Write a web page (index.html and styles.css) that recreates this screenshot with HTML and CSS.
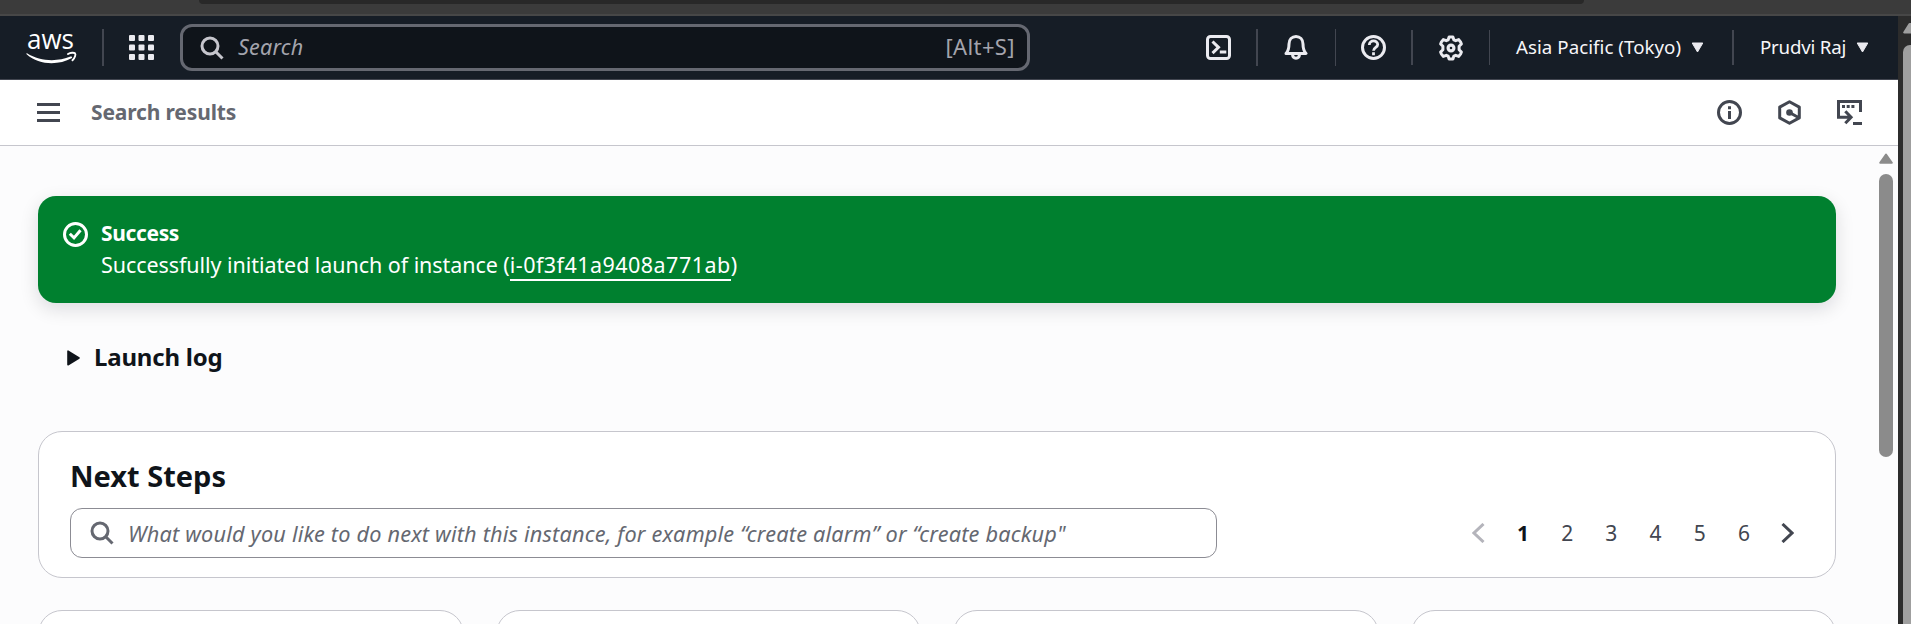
FILE: index.html
```html
<!DOCTYPE html>
<html lang="en">
<head>
<meta charset="utf-8">
<title>Launch an instance</title>
<link rel="stylesheet" href="styles.css">
</head>
<body>
<div class="browser-edge"><div class="address-pill"></div></div>
<div class="window">
  <div class="page">
    <header class="topnav">
      <svg class="logo" width="52" height="46" viewBox="0 -12 52 46" aria-label="aws">
        <text class="logo-text" x="1" y="18" textLength="47" lengthAdjust="spacingAndGlyphs">aws</text>
        <path d="M1 22.200C14 30.500 31 31 44.500 25.600c1.400-.7 2.300.6 1 1.600C33 34.200 13 34.500.6 23.200c-.6-.6-.2-1.300.4-1z" fill="#fff"/>
        <path d="M42 23c2.600-1.600 6-1.600 7-.7 1 1 0 4.700-2.500 7" fill="none" stroke="#fff" stroke-width="1.900" stroke-linecap="round"/>
      </svg>
      <span class="divider logo-divider"></span>
      <svg class="apps" width="25" height="25" viewBox="0 0 25 25" fill="#ebebf0">
        <rect width="6" height="6" rx="1"/><rect x="9.500" width="6" height="6" rx="1"/><rect x="19" width="6" height="6" rx="1"/>
        <rect y="9.500" width="6" height="6" rx="1"/><rect x="9.500" y="9.500" width="6" height="6" rx="1"/><rect x="19" y="9.500" width="6" height="6" rx="1"/>
        <rect y="19" width="6" height="6" rx="1"/><rect x="9.500" y="19" width="6" height="6" rx="1"/><rect x="19" y="19" width="6" height="6" rx="1"/>
      </svg>
      <div class="search">
        <svg width="24" height="24" viewBox="0 0 24 24" fill="none" stroke="#c6c6cd" stroke-width="3"><circle cx="10" cy="10" r="8"/><path d="M15.500 15.500l7 7"/></svg>
        <span class="search-label">Search</span>
        <span class="search-key">[Alt+S]</span>
      </div>
      <nav class="tools">
        <div class="tool"><svg width="25" height="25" viewBox="0 0 25 25" fill="none" stroke="#ebebf0" stroke-width="3"><rect x="1.500" y="1.500" width="22" height="22" rx="3"/><path d="M6.500 6.500l6 5.800-6 5.800M13.800 17h6.500"/></svg></div>
        <div class="tool thin bell"><svg width="24" height="25" viewBox="0 0 24 25" fill="none" stroke="#ebebf0" stroke-width="3" stroke-linejoin="round"><path d="M2 18.500c2.700-3 3-5 3-9.500C5 4.500 8 1.500 12 1.500s7 3 7 7.500c0 4.500.3 6.500 3 9.500z"/><path d="M8.500 19.500c.3 5 6.700 5 7 0"/></svg></div>
        <div class="tool short"><svg width="25" height="25" viewBox="0 0 25 25" fill="none" stroke="#ebebf0"><circle cx="12.500" cy="12.500" r="11" stroke-width="3"/><path d="M8.300 10c0-5.400 8.400-5.200 8.400-.5 0 3-4.200 2.800-4.200 6.300M12.500 17.300v3" stroke-width="2.800"/></svg></div>
        <div class="tool thin short"><svg width="26" height="26" viewBox="0 0 26 26" fill="none" stroke="#ebebf0" stroke-width="3" stroke-linejoin="round"><path d="M11.100 2h3.800l1 2.900 1.800.8 3-1.100 2 2.600.7 1.800-2.300 2.300v3.400l2.300 2.300-.7 1.800-2 2.600-3-1.100-1.800.8-1 2.900h-3.800l-1-2.900-1.800-.8-3 1.100-2-2.600L2.600 17l2.300-2.300v-3.400L2.600 9l.7-1.800 2-2.600 3 1.100 1.800-.8z"/><circle cx="13" cy="13" r="2.900" stroke-width="3.200"/></svg></div>
        <div class="menu region"><span class="region-name">Asia Pacific (Tokyo)</span><svg width="13" height="11" viewBox="0 0 13 11"><path d="M1.200 1h10.600L6.500 10z" fill="#ebebf0" stroke="#ebebf0" stroke-linejoin="round"/></svg></div>
        <div class="menu"><span class="user-name">Prudvi Raj</span><svg width="13" height="11" viewBox="0 0 13 11"><path d="M1.200 1h10.600L6.500 10z" fill="#ebebf0" stroke="#ebebf0" stroke-linejoin="round"/></svg></div>
      </nav>
    </header>
    <div class="crumbs">
      <svg width="23" height="19" viewBox="0 0 23 19" fill="#424650"><path d="M0 0h23v3H0zM0 8h23v3H0zM0 16h23v3H0z"/></svg>
      <span class="crumb">Search results</span>
      <div class="crumb-tools">
        <svg width="25" height="25" viewBox="0 0 25 25" fill="none" stroke="#424650" stroke-width="3"><circle cx="12.500" cy="12.500" r="11"/><path d="M12.500 6.300v3M12.500 11v8"/></svg>
        <svg width="23" height="25" viewBox="0 0 23 25" fill="none" stroke="#424650" stroke-width="3" stroke-linejoin="round"><path d="M11.500 1.700l9.800 5.400v10.800l-9.800 5.400-9.800-5.400V7.100zM11.500 12.500l8.500 4.700"/><circle cx="11.500" cy="12.500" r="3.300" fill="#424650" stroke="none"/></svg>
        <svg width="25" height="25" viewBox="0 0 25 25" fill="none" stroke="#424650" stroke-width="3"><path d="M23.500 12V1.500h-22v15.800H13M8.300 11.300l5.800 6-5.800 6M16 23.500h9"/><path d="M5 6.500h13" stroke-dasharray="3 1.700"/></svg>
      </div>
    </div>
    <div class="body">
      <main class="content">
        <section class="flash">
          <svg width="25" height="25" viewBox="0 0 25 25" fill="none" stroke="#fff" stroke-width="3"><circle cx="12.500" cy="12.500" r="11"/><path d="M6.800 11.800l4.200 4.100 6.500-7.600"/></svg>
          <div>
            <div class="flash-title">Success</div>
            <div class="flash-text">Successfully initiated launch of instance (<a class="instance">i-0f3f41a9408a771ab</a>)</div>
          </div>
        </section>
        <div class="log">
          <svg width="13" height="16" viewBox="0 0 13 16"><path d="M1 1.200v13.600L12 8z" fill="#0f141a" stroke="#0f141a" stroke-width="1.600" stroke-linejoin="round"/></svg>
          <span class="log-title">Launch log</span>
        </div>
        <section class="card next">
          <h2>Next Steps</h2>
          <div class="filter">
            <div class="input">
              <svg width="24" height="24" viewBox="0 0 24 24" fill="none" stroke="#656871" stroke-width="3"><circle cx="10" cy="10" r="8"/><path d="M15.500 15.500l7 7"/></svg>
              <span class="placeholder">What would you like to do next with this instance, for example “create alarm” or “create backup"</span>
            </div>
            <div class="pages">
              <svg width="13" height="20" viewBox="0 0 13 20" fill="none" stroke="#b4b4bb" stroke-width="3"><path d="M11.500 1L2 10l9.500 9"/></svg>
              <div class="numbers"><span class="current">1</span><span>2</span><span>3</span><span>4</span><span>5</span><span>6</span></div>
              <svg width="13" height="20" viewBox="0 0 13 20" fill="none" stroke="#424650" stroke-width="3"><path d="M1.500 1L11 10l-9.500 9"/></svg>
            </div>
          </div>
        </section>
        <div class="tiles"><div class="card"></div><div class="card"></div><div class="card"></div><div class="card"></div></div>
      </main>
      <div class="scroll">
        <svg width="14" height="11" viewBox="0 0 14 11"><path d="M7 1.500L12.800 9.800H1.200z" fill="#8b8b8b" stroke="#8b8b8b" stroke-width="2" stroke-linejoin="round"/></svg>
        <div class="thumb"></div>
      </div>
    </div>
  </div>
  <div class="outer-scroll">
    <svg width="8" height="11" viewBox="0 0 8 11"><path d="M8 1H6.500L1.200 9.500H8z" fill="#9f9f9f" stroke="#9f9f9f" stroke-width="2" stroke-linejoin="round"/></svg>
    <div class="outer-thumb"></div>
  </div>
</div>
</body>
</html>
```
FILE: styles.css
```css
* { box-sizing: border-box; }
body {
  margin: 0;
  height: 624px;
  overflow: hidden;
  display: flex;
  flex-direction: column;
  background: #2c2c2c;
  color: #0f141a;
  font-family: "Noto Sans", "Open Sans", sans-serif;
  font-size: 21px;
}
svg { display: block; flex: none; }
span, .flash-text { white-space: nowrap; }
.browser-edge { height: 16px; flex: none; background: #3b3b3b; border-bottom: 2px solid #474747; }
.address-pill { height: 4px; margin: 0 327px 0 199px; background: #282828; border-radius: 0 0 14px 14px; }
.window { display: flex; height: 608px; overflow: hidden; }
.page { width: 1898px; display: flex; flex-direction: column; background: #fcfcfd; }

.topnav { height: 64px; flex: none; display: flex; align-items: center; padding-left: 26px; background: #161d26; border-bottom: 1px solid #424650; color: #ebebf0; }
.logo { margin-bottom: 12px; }
.logo-text { font-family: "Open Sans", "Noto Sans", sans-serif; font-size: 28px; font-weight: 500; fill: #fff; }
.divider { width: 2px; height: 37px; background: #424650; }
.logo-divider { margin-left: 24px; }
.apps { margin-left: 25px; }
.search { width: 850px; height: 47px; margin-left: 26px; padding: 0 12px 0 17px; border: 3px solid #656871; border-radius: 12px; background: #0f141a; display: flex; align-items: center; }
.search-label { margin: -2px 0 0 14px; font-size: 21.500px; font-style: italic; letter-spacing: .2px; color: #a4a4ad; }
.search-key { margin: -3px 0 0 auto; font-size: 22px; letter-spacing: .4px; color: #a4a4ad; }
.tools { margin-left: 150px; display: flex; align-items: center; }
.tool { width: 78px; height: 37px; display: flex; align-items: center; justify-content: center; border-right: 2px solid #424650; }
.tool.thin { border-right-width: 1px; }
.tool.bell { padding-right: 2px; }
.tool.short { width: 77px; height: 35px; }
.menu { height: 35px; display: flex; align-items: center; gap: 10px; padding-left: 26px; font-size: 18.700px; color: #f6f6f9; }
.menu span { margin-top: -2px; }
.region { width: 244px; border-right: 2px solid #424650; }
.region-name { letter-spacing: .05px; }
.user-name { letter-spacing: -.2px; }

.crumbs { height: 66px; flex: none; display: flex; align-items: center; padding: 0 36px 0 37px; background: #fff; border-bottom: 1px solid #c6c6cd; }
.crumb { margin: -2px 0 0 31px; font-weight: 700; letter-spacing: -.15px; color: #656871; }
.crumb-tools { margin-left: auto; display: flex; gap: 36px; }

.body { flex: 1; display: flex; min-height: 0; overflow: hidden; }
.content { width: 1836px; padding: 50px 0 0 38px; }
.flash { height: 107px; padding: 26px 25px; display: flex; gap: 13px; border-radius: 18px; background: #00802f; color: #fff; box-shadow: 0 6px 18px 1px rgba(0, 7, 22, .12); }
.flash-title, .flash-text { height: 32px; line-height: 32px; }
.flash-title { font-weight: 700; letter-spacing: -.35px; margin-top: -5px; }
.flash-text { font-size: 21.500px; letter-spacing: -.06px; }
.instance { letter-spacing: .47px; border-bottom: 2px solid #fff; }
.log { height: 128px; padding: 37px 0 0 29px; display: flex; gap: 14px; }
.log svg { margin-top: 10px; }
.log-title { font-size: 24px; font-weight: 700; letter-spacing: -.2px; line-height: 34px; }
.card { background: #fff; border: 1px solid #c6c6cd; border-radius: 24px; }
.next { height: 147px; padding: 24px 31px; }
h2 { margin: 0; font-size: 29px; line-height: 40px; height: 52px; }
.filter { display: flex; justify-content: space-between; }
.input { width: 1147px; height: 50px; padding-left: 19px; display: flex; align-items: center; border: 1px solid #8c8c94; border-radius: 12px; }
.placeholder { margin-left: 14px; font-size: 21.700px; font-style: italic; letter-spacing: .19px; color: #656871; }
.pages { display: flex; align-items: center; color: #424650; padding-right: 10px; }
.numbers { display: flex; margin: 0 15px 0 16px; }
.numbers span { width: 44.200px; text-align: center; }
.numbers .current { font-weight: 700; color: #0f141a; }
.tiles { margin-top: 32px; display: grid; grid-template-columns: repeat(4, 1fr); gap: 32px; }
.tiles .card { height: 200px; }

.scroll { margin-left: 43px; padding-top: 7px; width: 14px; }
.thumb { height: 283px; margin-top: 10px; border-radius: 7px; background: #8b8b8b; }
.outer-scroll { width: 13px; padding: 7px 0 0 5px; overflow: hidden; }
.outer-thumb { width: 14px; height: 700px; margin-top: 11px; border-radius: 7px; background: #9f9f9f; }
```
